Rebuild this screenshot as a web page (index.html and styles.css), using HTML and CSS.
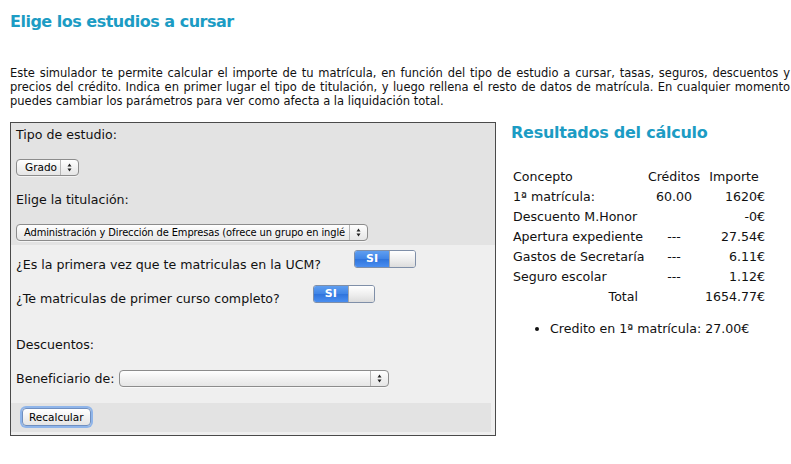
FILE: index.html
```html
<!DOCTYPE html>
<html lang="es">
<head>
<meta charset="utf-8">
<title>Simulador de matrícula</title>
<link rel="stylesheet" href="styles.css">
</head>
<body>
<h1 class="title">Elige los estudios a cursar</h1>
<p class="intro">Este simulador te permite calcular el importe de tu matrícula, en función del tipo de estudio a cursar, tasas, seguros, descuentos y precios del crédito. Indica en primer lugar el tipo de titulación, y luego rellena el resto de datos de matrícula. En cualquier momento puedes cambiar los parámetros para ver como afecta a la liquidación total.</p>
<div class="main">
  <form class="panel">
    <div class="sec-top">
      <div class="lbl first">Tipo de estudio:</div>
      <div class="sel sel-grado">
        <span class="sel-text">Grado</span>
        <span class="sel-arrows"><svg width="5" height="9" viewBox="0 0 5 9"><path d="M2.5 0.5L4.5 3.5H0.5Z M2.5 8.5L4.5 5.5H0.5Z" fill="#222"/></svg></span>
      </div>
      <div class="lbl">Elige la titulación:</div>
      <div class="sel sel-tit">
        <span class="sel-text">Administración y Dirección de Empresas (ofrece un grupo en inglé</span>
        <span class="sel-arrows"><svg width="5" height="9" viewBox="0 0 5 9"><path d="M2.5 0.5L4.5 3.5H0.5Z M2.5 8.5L4.5 5.5H0.5Z" fill="#222"/></svg></span>
      </div>
    </div>
    <div class="sec-mid">
      <div class="q q1">
        <span class="q-text">¿Es la primera vez que te matriculas en la UCM?</span>
        <span class="toggle"><span class="tg-on">SI</span><span class="tg-knob"></span></span>
      </div>
      <div class="q q2">
        <span class="q-text">¿Te matriculas de primer curso completo?</span>
        <span class="toggle"><span class="tg-on">SI</span><span class="tg-knob"></span></span>
      </div>
      <div class="lbl desc">Descuentos:</div>
      <div class="benef">
        <span class="benef-lbl">Beneficiario de:</span>
        <div class="sel sel-benef">
          <span class="sel-text"></span>
          <span class="sel-arrows"><svg width="5" height="9" viewBox="0 0 5 9"><path d="M2.5 0.5L4.5 3.5H0.5Z M2.5 8.5L4.5 5.5H0.5Z" fill="#222"/></svg></span>
        </div>
      </div>
    </div>
    <div class="sec-bot">
      <button type="button" class="btn">Recalcular</button>
    </div>
  </form>
  <div class="results">
    <h2 class="res-title">Resultados del cálculo</h2>
    <table class="res-table">
      <colgroup><col class="w1"><col class="w2"><col class="w3"></colgroup>
      <tr><td class="c1">Concepto</td><td class="c2">Créditos</td><td class="c3 hd">Importe</td></tr>
      <tr><td class="c1">1ª matrícula:</td><td class="c2">60.00</td><td class="c3">1620€</td></tr>
      <tr><td class="c1">Descuento M.Honor</td><td class="c2"></td><td class="c3">-0€</td></tr>
      <tr><td class="c1">Apertura expediente</td><td class="c2">---</td><td class="c3">27.54€</td></tr>
      <tr><td class="c1">Gastos de Secretaría</td><td class="c2">---</td><td class="c3">6.11€</td></tr>
      <tr><td class="c1">Seguro escolar</td><td class="c2">---</td><td class="c3">1.12€</td></tr>
      <tr><td class="c1 total">Total</td><td class="c2"></td><td class="c3">1654.77€</td></tr>
    </table>
    <ul class="res-list">
      <li>Credito en 1ª matrícula: 27.00€</li>
    </ul>
  </div>
</div>
</body>
</html>
```
FILE: styles.css
```css
html, body {
  margin: 0;
  padding: 0;
  background: #fff;
}
body {
  padding: 0 1px 0 10px;
  font-family: "DejaVu Sans", "Liberation Sans", sans-serif;
  color: #111;
}
.title {
  margin: 11px 0 0;
  font-size: 16px;
  line-height: 22px;
  letter-spacing: -0.5px;
  color: #1c9cc4;
  font-weight: bold;
}
.intro {
  margin: 33px 0 0;
  font-size: 11.5px;
  line-height: 14px;
  text-align: justify;
}
.main {
  display: flex;
  align-items: flex-start;
  gap: 15px;
  margin-top: 14px;
}
.panel {
  width: 484px;
  border: 1px solid #4a4a4a;
  background: #efefef;
  margin: 0;
}
.sec-top {
  background: #e3e3e3;
  padding: 4px 5px 4px;
}
.lbl {
  font-size: 12.6px;
  line-height: 16px;
  margin-top: 16px;
}
.lbl.first { margin-top: 0; }
.sel {
  display: flex;
  align-items: stretch;
  height: 15px;
  border: 1px solid #8c8c8c;
  border-radius: 4px;
  background: linear-gradient(#ffffff, #f0f0f0 55%, #e6e6e6);
  font-size: 10.5px;
  line-height: 15px;
  color: #000;
  margin-top: 16px;
  box-shadow: 0 1px 0 rgba(255,255,255,0.6);
}
.sel-text {
  flex: 1;
  padding-left: 8px;
  white-space: nowrap;
  overflow: hidden;
}
.sel-arrows {
  width: 17px;
  border-left: 1px solid #b5b5b5;
  display: flex;
  align-items: center;
  justify-content: center;
}
.sel-grado { width: 61px; }
.sel-tit { width: 350px; }
.sel-tit .sel-text {
  padding-left: 7px;
  font-size: 9.9px;
  letter-spacing: -0.1px;
}
.sel-benef { width: 268px; margin-top: 0; }
.sec-mid {
  padding: 5px 5px 16px;
}
.q {
  display: flex;
  align-items: flex-start;
}
.q-text {
  font-size: 12.6px;
  line-height: 16px;
  margin-top: 7px;
}
.q2 { margin-top: 12px; }
.q2 .q-text { margin-top: 6px; }
.toggle {
  display: flex;
  width: 60px;
  height: 16px;
  border: 1px solid #7f8fa8;
  border-radius: 3px;
  overflow: hidden;
  margin-left: 33px;
}
.tg-on {
  width: 34px;
  background: linear-gradient(#5f9ef0, #3f84e6 50%, #2f74dc 51%, #4a8ef0);
  color: #fff;
  font-weight: bold;
  font-size: 11px;
  line-height: 16px;
  text-align: center;
}
.tg-knob {
  flex: 1;
  background: linear-gradient(#ffffff, #ececec 60%, #dcdcdc);
  border-left: 1px solid #aaa;
}
.desc { margin-top: 30px; }
.benef {
  display: flex;
  align-items: center;
  gap: 4px;
  margin-top: 17px;
  font-size: 12.6px;
  line-height: 17px;
}
.sec-bot {
  background: #e3e3e3;
  margin: 0 4px 3px 0;
  padding: 5px 10px 6px 11px;
}
.btn {
  display: block;
  height: 18px;
  padding: 0 6px;
  font-family: "DejaVu Sans", sans-serif;
  font-size: 10.5px;
  color: #000;
  background: linear-gradient(#ffffff, #f2f2f2 50%, #e4e4e4);
  border: 1px solid #6f8fc0;
  border-radius: 4px;
  box-shadow: 0 0 0 2px #8fb5ea;
}
.results {
  flex: 1;
}
.res-title {
  margin: 0;
  font-size: 16px;
  line-height: 22px;
  letter-spacing: -0.25px;
  color: #1c9cc4;
  font-weight: bold;
}
.res-table {
  margin-top: 22px;
  margin-left: 2px;
  width: 252px;
  table-layout: fixed;
  border-collapse: collapse;
  font-size: 12.6px;
}
.w1 { width: 132px; }
.w2 { width: 58px; }
.w3 { width: 62px; }
.res-table td {
  height: 20px;
  padding: 0;
  white-space: nowrap;
}
.c1 { text-align: left; }
.c1.total { text-align: right; padding-right: 7px; }
.c2 { text-align: center; }
.c3 { text-align: right; }
.c3.hd { text-align: center; }
.res-list {
  margin: 15px 0 0;
  padding-left: 39px;
  font-size: 12.6px;
  line-height: 16px;
}
```
